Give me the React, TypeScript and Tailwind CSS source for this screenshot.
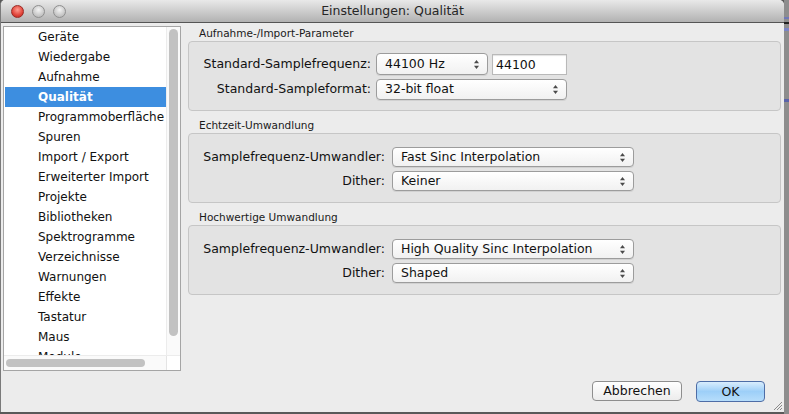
import React from 'react';

const items = [
  'Geräte',
  'Wiedergabe',
  'Aufnahme',
  'Qualität',
  'Programmoberfläche',
  'Spuren',
  'Import / Export',
  'Erweiterter Import',
  'Projekte',
  'Bibliotheken',
  'Spektrogramme',
  'Verzeichnisse',
  'Warnungen',
  'Effekte',
  'Tastatur',
  'Maus',
  'Module',
];

const Arrows: React.FC = () => (
  <svg width="7" height="11" viewBox="0 0 7 11" className="shrink-0">
    <path d="M3.5 1 L6 4.2 H1 Z" fill="#4a4a4a" />
    <path d="M3.5 10 L6 6.8 H1 Z" fill="#4a4a4a" />
  </svg>
);

const Select: React.FC<{ value: string; className: string }> = ({ value, className }) => (
  <div
    className={`flex items-center justify-between pl-[8px] pr-[7px] rounded-[4px] border border-[#9c9c9c] bg-gradient-to-b from-white to-[#f1f1f1] shadow-[0_1px_0_rgba(0,0,0,0.08)] text-[12.5px] text-[#111] ${className}`}
  >
    <span>{value}</span>
    <Arrows />
  </div>
);

const Group: React.FC<{ title: string; children: React.ReactNode; first?: boolean }> = ({ title, children, first }) => (
  <div className={first ? 'pt-0' : 'pt-[4px]'}>
    <div className="pl-[11px] h-[18px] pt-[3px] text-[10.5px] text-[#1a1a1a] leading-[14px]">{title}</div>
    <div className="h-[70px] rounded-[4px] border border-[#c6c6c6] bg-[#e3e3e3]">{children}</div>
  </div>
);

const Label: React.FC<{ w: string; children: React.ReactNode }> = ({ w, children }) => (
  <div className={`${w} text-right text-[12.5px] text-[#111] whitespace-nowrap`}>{children}</div>
);

const App: React.FC = () => {
  return (
    <div
      className="w-[789px] h-[414px] bg-[#595959] overflow-hidden relative"
      style={{ fontFamily: '"DejaVu Sans", "Noto Sans", sans-serif' }}
    >
      {/* background strip on the right */}
      <div className="absolute right-0 top-0 w-[5px] h-full bg-[#8d8d8d]">
        <div className="mt-[17px] h-[2px] bg-[#6f78b8]" />
        <div className="mt-[3px] h-[2px] bg-[#222]" />
        <div className="mt-[4px] h-[3px] bg-[#7a84c4]" />
        <div className="mt-[68px] h-[3px] bg-[#5a63a8]" />
      </div>

      <div className="w-[784px] h-[412px] rounded-t-[5px] bg-[#ececec] flex flex-col overflow-hidden border-l border-[#7a7a7a]">
        {/* title bar */}
        <div className="h-[23px] shrink-0 relative flex items-center justify-center bg-gradient-to-b from-[#e9e9e9] to-[#b2b2b2] border-b border-[#555]">
          <div className="absolute left-[10px] top-[5px] flex gap-[8px]">
            <div className="w-[13px] h-[13px] rounded-full border border-[#9b2a24] bg-[radial-gradient(circle_at_50%_35%,#ff9b8f,#e0443a_60%,#b3231c)]" />
            <div className="w-[13px] h-[13px] rounded-full border border-[#8f8f8f] bg-[radial-gradient(circle_at_50%_35%,#f4f4f4,#c9c9c9_60%,#b0b0b0)]" />
            <div className="w-[13px] h-[13px] rounded-full border border-[#8f8f8f] bg-[radial-gradient(circle_at_50%_35%,#f4f4f4,#c9c9c9_60%,#b0b0b0)]" />
          </div>
          <span className="text-[12.5px] text-[#262626]">Einstellungen: Qualität</span>
        </div>

        <div className="flex-1 flex relative">
          {/* sidebar list */}
          <div className="ml-[2px] mt-[3px] w-[178px] h-[345px] border border-[#a5a5a5] bg-white flex flex-col">
            <div className="flex flex-1 min-h-0">
              <div className="flex-1 overflow-hidden pl-[1px]">
                {items.map((it, i) => (
                  <div
                    key={it}
                    className={`h-[20px] pl-[33px] text-[12px] leading-[20px] whitespace-nowrap ${
                      i === 3 ? 'bg-[#3d8ee0] text-white font-bold' : 'text-[#111]'
                    }`}
                  >
                    {it}
                  </div>
                ))}
              </div>
              <div className="w-[14px] border-l border-[#ececec] bg-[#fafafa] pt-[2px] px-[2px]">
                <div className="h-[307px] rounded-full bg-[#c2c2c2]" />
              </div>
            </div>
            <div className="h-[15px] flex border-t border-[#ececec] bg-[#fafafa]">
              <div className="flex-1 pt-[3px] pl-[2px]">
                <div className="w-[139px] h-[8px] rounded-full bg-[#c2c2c2]" />
              </div>
              <div className="w-[14px] border-l border-[#e4e4e4] bg-white" />
            </div>
          </div>

          {/* main panel */}
          <div className="ml-[7px] mr-[3px] flex-1">
            <Group title="Aufnahme-/Import-Parameter" first>
              <div className="pl-[12px] pt-[11px] flex flex-col gap-[4px]">
                <div className="flex items-center">
                  <Label w="w-[170px]">Standard-Samplefrequenz:</Label>
                  <Select value="44100 Hz" className="ml-[5px] w-[112px] h-[22px]" />
                  <div className="ml-[4px] w-[75px] h-[21px] border border-[#b9b9b9] bg-white text-[12.5px] leading-[19px] pl-[3px] text-[#111] shadow-[inset_0_1px_1px_rgba(0,0,0,0.12)]">
                    44100
                  </div>
                </div>
                <div className="flex items-center">
                  <Label w="w-[170px]">Standard-Sampleformat:</Label>
                  <Select value="32-bit float" className="ml-[5px] w-[191px] h-[21px]" />
                </div>
              </div>
            </Group>
            <Group title="Echtzeit-Umwandlung">
              <div className="pl-[12px] pt-[13px] flex flex-col gap-[4px]">
                <div className="flex items-center">
                  <Label w="w-[184px]">Samplefrequenz-Umwandler:</Label>
                  <Select value="Fast Sinc Interpolation" className="ml-[7px] w-[242px] h-[20px]" />
                </div>
                <div className="flex items-center">
                  <Label w="w-[184px]">Dither:</Label>
                  <Select value="Keiner" className="ml-[7px] w-[242px] h-[20px]" />
                </div>
              </div>
            </Group>
            <Group title="Hochwertige Umwandlung">
              <div className="pl-[12px] pt-[13px] flex flex-col gap-[4px]">
                <div className="flex items-center">
                  <Label w="w-[184px]">Samplefrequenz-Umwandler:</Label>
                  <Select value="High Quality Sinc Interpolation" className="ml-[7px] w-[242px] h-[20px]" />
                </div>
                <div className="flex items-center">
                  <Label w="w-[184px]">Dither:</Label>
                  <Select value="Shaped" className="ml-[7px] w-[242px] h-[20px]" />
                </div>
              </div>
            </Group>
          </div>

          {/* buttons */}
          <div className="absolute right-[19px] bottom-[10px] flex gap-[14px]">
            <div className="w-[90px] h-[20px] rounded-[4px] border border-[#8e8e8e] bg-gradient-to-b from-white to-[#ececec] text-[12.5px] leading-[18px] text-center text-[#111]">
              Abbrechen
            </div>
            <div className="w-[69px] h-[21px] rounded-[4px] border border-[#4e6da6] bg-gradient-to-b from-[#d9edfd] via-[#9dcff8] to-[#b6ddfb] text-[12.5px] leading-[19px] text-center text-[#111]">
              OK
            </div>
          </div>

          {/* resize grip */}
          <svg className="absolute right-[1px] bottom-[1px]" width="11" height="11" viewBox="0 0 11 11">
            <path d="M10 2 L2 10 M10 5 L5 10 M10 8 L8 10" stroke="#8a8a8a" strokeWidth="1" />
          </svg>
        </div>
      </div>
    </div>
  );
};

export default App;
